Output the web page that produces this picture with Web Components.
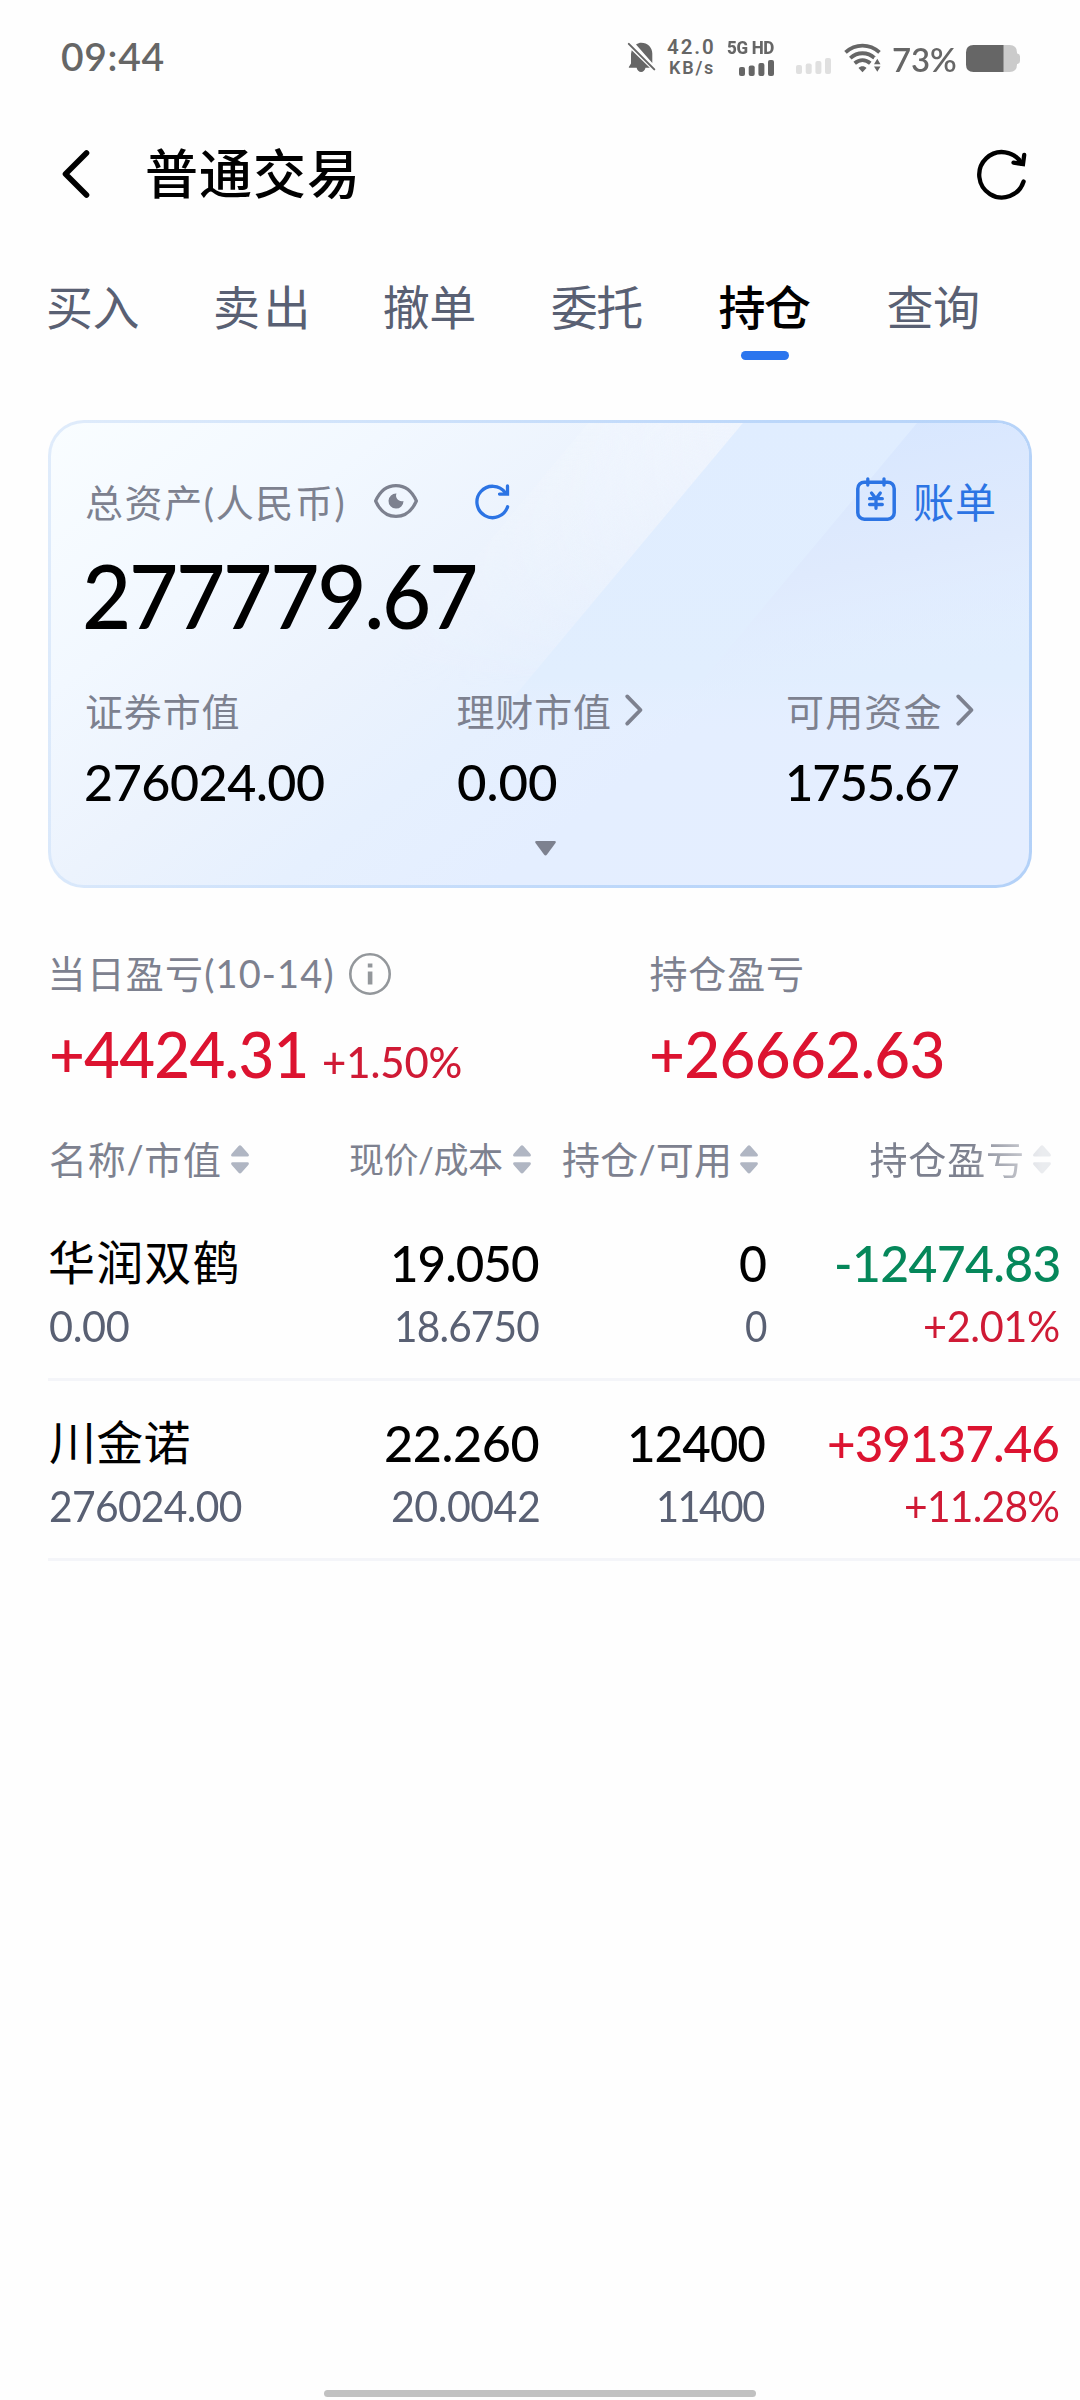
<!DOCTYPE html>
<html lang="zh-CN">
<head>
<meta charset="utf-8">
<title>普通交易</title>
<style>
html,body{margin:0;padding:0;background:#fefefe}
body{width:1080px;height:2400px;overflow:hidden;font-family:Lato,"Noto Sans CJK SC",sans-serif}
</style>
</head>
<body>
<trade-page></trade-page>
<script>
const ctx = document.createElement('canvas').getContext('2d');

class Base extends HTMLElement {
  constructor(){ super(); this.attachShadow({mode:'open'}); }
  connectedCallback(){ this.shadowRoot.innerHTML = `<style>*{box-sizing:border-box}${this.css()}</style>${this.html()}`; }
  css(){ return ''; }
  html(){ return '<slot></slot>'; }
}

/* One line of text whose ink spans exactly w pixels; text that is too wide is
   narrowed half by scaling and half by tracking. */
class FitText extends Base {
  css(){
    const s=+this.getAttribute('s'), w=+this.getAttribute('w'), wt=this.getAttribute('wt')||400, t=this.textContent;
    const stack=`${this.getAttribute('f')||'Lato'},"Noto Sans CJK SC",sans-serif`;
    ctx.font=`${wt} ${s}px ${stack}`;
    const m=ctx.measureText(t), ink=m.actualBoundingBoxLeft+m.actualBoundingBoxRight;
    const n=[...t].length, k=ink>w&&/^[ -~]+$/.test(t)?Math.sqrt(w/ink):1;
    const ls=n>1?(w/k-ink)/(n-1):0;
    return `:host{display:block;flex:none;width:${w}px;height:${s}px;line-height:${s}px;font-family:${stack};font-size:${s}px;font-weight:${wt};white-space:nowrap;letter-spacing:${ls.toFixed(3)}px;color:${this.getAttribute('c')||'inherit'}}
    span{display:block;margin-left:${(m.actualBoundingBoxLeft*k).toFixed(2)}px;${k<1?`transform:scaleX(${k.toFixed(4)});transform-origin:0 50%`:''}}`;
  }
  html(){ return '<span><slot></slot></span>'; }
}
customElements.define('fit-text',FitText);

const ICONS = {
  mute:[27,30,`<path fill="currentColor" d="M8 2.6C10 1.2 11.300 .7 13.300 .7c6.200 0 11 4.700 11 10.800v9.500zM3.700 8.300 21.800 25.800H17.500c-.6 2.600-2.200 4.200-4.400 4.200s-3.900-1.600-4.500-4.200H1.400C.6 25.800.7 24.800 1.300 24.200L3 21.500V12z"/><path d="M.8 1.900 26.300 27.400" stroke="currentColor" stroke-width="2" stroke-linecap="round"/>`],
  bars:[35,16,`<g fill="currentColor"><rect y="7" width="6" height="9" rx="2"/><rect x="9.700" y="5.500" width="6" height="10.500" rx="2"/><rect x="19.400" y="3" width="6" height="13" rx="2"/><rect x="29" width="6" height="16" rx="2"/></g>`],
  wifi:[37,30,`<g fill="none" stroke="currentColor" stroke-width="3.800"><path d="M1.500 9.300C11.500 .3 25.500 .3 35.500 9.300"/><path d="M6.300 15.100C13.500 8.600 23.500 8.600 30.700 15.100"/><path d="M10.700 20.300C15.500 16.200 21.500 16.200 26.300 20.300"/></g><path fill="currentColor" d="M14.500 25c2-2.300 6-2.300 8 0l-4 4.300z"/><path fill="#fefefe" d="M31 13.500 39 16.500V31H28V19z"/><path fill="currentColor" d="M33.300 15.800 36.500 21.300H30zM33.300 28.800 30 23.400h6.500z"/>`],
  battery:[54,27,`<path fill="#cbcbcb" d="M37 0h6.500Q51 0 51 7.500V8.500h.5q2.500.5 2.500 3v4.500q0 2.500-2.500 3H51v.5Q51 27 43.500 27H37z"/><path fill="#666" d="M7.500 0H37.500V27H7.500Q0 27 0 19.500v-12Q0 0 7.500 0z"/>`],
  back:[28,48,`<path d="M24.500 3 3.500 24 24.500 45" fill="none" stroke="#000" stroke-width="5.600" stroke-linecap="round" stroke-linejoin="round"/>`],
  reload:[50,50,`<path d="M46.600 32.500A22.700 22.700 0 1 1 44.700 14.600" fill="none" stroke="#000" stroke-width="4.300" stroke-linecap="round"/><path d="M47.200 6 46 15.100 36.500 13.600" fill="none" stroke="#000" stroke-width="4.300" stroke-linecap="round" stroke-linejoin="miter"/>`],
  eye:[44,34,`<path d="M1.600 17C6 7 13.500 1.600 22 1.600S38 7 42.400 17C38 27 30.500 32.400 22 32.400S6 27 1.600 17z" fill="none" stroke="#7d818f" stroke-width="3.200" stroke-linejoin="round"/><path fill="#7d818f" d="M22.500 9.600A7.500 7.500 0 1 0 29.500 17C25 18.300 20.500 14 22.500 9.600z"/>`],
  sync:[35,35,`<path d="M32.600 22.700A15.700 15.700 0 1 1 30.300 8.700" fill="none" stroke="#2c74e4" stroke-width="3.300" stroke-linecap="round"/><path d="M32.500 2V10.100H24.500" fill="none" stroke="#2c74e4" stroke-width="3.300" stroke-linecap="round"/>`],
  bill:[40,44,`<rect x="1.800" y="5.200" width="36.400" height="37" rx="6.500" fill="none" stroke="#2c74e4" stroke-width="3.500"/><g fill="none" stroke="#2c74e4" stroke-width="3.300" stroke-linecap="round"><path d="M11.800 1.800V8M28 1.800V8M15.500 16 20 21.800 24.300 16M20 22V31.300M13.600 21.700H26.300M13.600 27.500H26.300"/></g>`],
  more:[18,32,`<path d="M2.200 2.400 15.500 16 2.200 29.600" fill="none" stroke="#7d818f" stroke-width="3.800" stroke-linecap="round" stroke-linejoin="round"/>`],
  down:[21,15,`<path d="M1.500 0H19.500Q21.500.2 20.500 2L12 13.500Q10.500 15.500 9 13.500L.5 2Q-.5.2 1.500 0z" fill="#7d818f"/>`],
  info:[42,42,`<circle cx="21" cy="21" r="19.700" fill="none" stroke="#93979b" stroke-width="2.600"/><path fill="#93979b" d="M18.800 10.500h4.600v4h-4.600zM18.800 18.500h4.600v13h-4.600z"/>`],
  sort:[18,29,`<path fill="#b0b6c3" d="M7.600 1Q9 -.6 10.400 1L17.500 9Q18.600 11.500 16.500 11.500H1.500Q-.6 11.500.5 9zM7.600 27.800Q9 29.400 10.400 27.800L17.500 19.800Q18.600 17.300 16.500 17.300H1.500Q-.6 17.300.5 19.800z"/>`]
};
class UiIcon extends Base {
  css(){ const [w,h]=ICONS[this.getAttribute('name')]; return `:host{display:block;flex:none;width:${w}px;height:${h}px}svg{display:block;overflow:visible}`; }
  html(){ const [w,h,p]=ICONS[this.getAttribute('name')]; return `<svg width="${w}" height="${h}" viewBox="0 0 ${w} ${h}">${p}</svg>`; }
}
customElements.define('ui-icon',UiIcon);

class StatusBar extends Base {
  css(){ return `:host{display:flex;height:114px;padding:2px 60px 0 62px;align-items:center;color:#666}
  .gap{flex:1}.col{display:flex;flex-direction:column;align-items:flex-end}
  .net{margin:0 0 2px 12px}.sig{margin-left:14px}.faint{color:#e0e0e0;margin:16px 13px 0 22px}`; }
  html(){ return `<fit-text s="39" w="101.500" wt="600" style="margin-bottom:3px">09:44</fit-text><div class="gap"></div>
  <ui-icon name="mute" style="margin-top:-2px"></ui-icon>
  <div class="col net"><fit-text f="Roboto" s="20.500" w="46" wt="600">42.0</fit-text><fit-text f="Roboto" s="18" w="43" wt="600" style="margin-top:1px">KB/s</fit-text></div>
  <div class="col sig"><fit-text f="Roboto" s="17.500" w="47" wt="800">5G HD</fit-text><ui-icon name="bars" style="margin-top:2px"></ui-icon></div>
  <ui-icon name="bars" class="faint"></ui-icon>
  <ui-icon name="wifi"></ui-icon>
  <fit-text s="33" w="63" wt="600" style="margin:2px 10px 0 12px">73%</fit-text>
  <ui-icon name="battery" style="margin-top:1px"></ui-icon>`; }
}
customElements.define('status-bar',StatusBar);

class NavHeader extends Base {
  css(){ return `:host{display:flex;height:120px;align-items:center;padding:0 53px 0 62px}ui-icon:last-child{margin-left:auto}fit-text{margin:0 0 2px 57px}`; }
  html(){ return `<ui-icon name="back"></ui-icon><fit-text s="53" w="208" wt="500" c="#000">${this.getAttribute('label')}</fit-text><ui-icon name="reload"></ui-icon>`; }
}
customElements.define('nav-header',NavHeader);

class TabItem extends Base {
  css(){ return `:host{display:flex;flex-direction:column;align-items:center;width:91px;color:#596073}
  :host([active]){color:#000}i{display:none;width:48px;height:9px;border-radius:5px;background:#2b75ee;margin-top:20px}:host([active]) i{display:block}`; }
  html(){ const a=this.hasAttribute('active'); return `<fit-text s="47" w="90.500" wt="${a?500:400}">${this.getAttribute('label')}</fit-text><i></i>`; }
}
customElements.define('tab-item',TabItem);
class TabBar extends Base {
  css(){ return `:host{display:flex;gap:76.900px;height:126px;padding:50px 0 0 47.800px}`; }
}
customElements.define('tab-bar',TabBar);

class AssetCard extends Base {
  css(){ return `:host{display:block;position:relative;margin:60px 48px 0;height:468px;border:3px solid transparent;border-radius:36px;overflow:hidden;color:#000;
   background:linear-gradient(142deg,#f9fdff 0%,#f2f8ff 22%,#ecf3fd 38%,#e6f0fe 52%,#e4eeff 66%,#e5eeff 100%) padding-box,linear-gradient(105deg,#e0ecfb,#bcd7fa 65%,#b3d1f8) border-box}
  .bg{position:absolute;inset:0}
  .in{position:relative;padding:49px 35px 0}
  .row{display:flex;align-items:center;height:60px}
  .big{margin-top:18px}
  .cols{display:grid;grid-template-columns:371.500px 330.500px 1fr;margin-top:53px}
  .lab{display:flex;align-items:center;height:38px;margin-bottom:26px}
  .lab ui-icon{margin:-2px 0 0 15px}
  .down{display:flex;justify-content:center;margin:34px 0 0 11px}`; }
  html(){ const g='#7d818f'; return `<svg class="bg" width="978" height="462" viewBox="51 423 978 462">
   <defs><linearGradient id="a" gradientUnits="userSpaceOnUse" x1="520" y1="423" x2="650" y2="532"><stop offset="0" stop-color="#f7faff" stop-opacity="0"/><stop offset=".4" stop-color="#f5f9ff" stop-opacity=".35"/><stop offset="1" stop-color="#f1f5fd" stop-opacity=".75"/></linearGradient>
   <linearGradient id="f" x1="0" y1="0" x2="0" y2="1"><stop offset="0" stop-color="#fff"/><stop offset="1" stop-color="#000"/></linearGradient>
   <mask id="m"><path fill="url(#f)" d="M360 423H743V690H360z"/></mask>
   <linearGradient id="b" x1="0" y1="0" x2="0" y2="1"><stop offset="0" stop-color="#e0edff"/><stop offset=".8" stop-color="#e1eefe"/><stop offset="1" stop-color="#e4eeff" stop-opacity="0"/></linearGradient>
   <linearGradient id="c" x1="0" y1="0" x2=".25" y2="1"><stop offset="0" stop-color="#d6e6ff"/><stop offset=".6" stop-color="#dfeafd"/><stop offset="1" stop-color="#e4eeff" stop-opacity="0"/></linearGradient></defs>
   <path fill="url(#a)" mask="url(#m)" d="M588 423H743L520 690H365z"/><path fill="url(#b)" d="M743 423H1029V740H478z"/><path fill="url(#c)" d="M917 423H1029V700H686z"/></svg>
  <div class="in">
   <div class="row"><fit-text s="38" w="257.500" c="${g}">总资产(人民币)</fit-text><ui-icon name="eye" style="margin:-2px 0 0 30px"></ui-icon><ui-icon name="sync" style="margin:-2px 0 0 57px"></ui-icon>
    <ui-icon name="bill" style="margin:-6px 18px 0 auto"></ui-icon><fit-text s="41" w="80" c="#2c74e4">账单</fit-text></div>
   <fit-text class="big" s="89" w="390" wt="500">277779.67</fit-text>
   <div class="cols">
    <div><div class="lab"><fit-text s="38" w="152.500" c="${g}">证券市值</fit-text></div><fit-text s="51" w="238.500" wt="500">276024.00</fit-text></div>
    <div><div class="lab"><fit-text s="38" w="152.500" c="${g}">理财市值</fit-text><ui-icon name="more"></ui-icon></div><fit-text s="51" w="99" wt="500">0.00</fit-text></div>
    <div><div class="lab"><fit-text s="38" w="152.500" c="${g}">可用资金</fit-text><ui-icon name="more"></ui-icon></div><fit-text s="51" w="170.500" wt="500">1755.67</fit-text></div>
   </div>
   <div class="down"><ui-icon name="down"></ui-icon></div>
  </div>`; }
}
customElements.define('asset-card',AssetCard);

class ProfitSummary extends Base {
  css(){ return `:host{display:grid;grid-template-columns:599px 1fr;padding:65px 0 0 51.500px;height:213px}
  .l{display:flex;align-items:center;height:40px;color:#7d818f}.v{display:flex;align-items:flex-end;margin-top:29px;color:#dc1330}`; }
  html(){ return `<div><div class="l"><fit-text s="38" w="281">当日盈亏(10-14)</fit-text><ui-icon name="info" style="margin:1px 0 0 16px"></ui-icon></div>
   <div class="v"><fit-text s="63" w="254" wt="500">+4424.31</fit-text><fit-text s="42" w="137.500" wt="500" style="margin:0 0 2px 18px" c="#cf1a35">+1.50%</fit-text></div></div>
   <div><div class="l"><fit-text s="38" w="151.500">持仓盈亏</fit-text></div><div class="v"><fit-text s="63" w="291" wt="500" style="margin-left:1px">+26662.63</fit-text></div></div>`; }
}
customElements.define('profit-summary',ProfitSummary);

class HoldHead extends Base {
  css(){ return `:host{display:grid;grid-template-columns:268px 213px 227px 293px;padding:16px 0 0 50px;height:100px;align-items:center;color:#7d818f}
  div{display:flex;align-items:center;justify-content:flex-end}div:first-of-type{justify-content:flex-start}ui-icon{margin-left:11px}
  div:last-child{-webkit-mask:linear-gradient(90deg,#000 72%,rgba(0,0,0,.25) 97%)}`; }
  html(){ return `<div><fit-text s="38" w="170">名称/市值</fit-text><ui-icon name="sort"></ui-icon></div><div><fit-text s="35" w="152">现价/成本</fit-text><ui-icon name="sort"></ui-icon></div><div><fit-text s="38" w="165">持仓/可用</fit-text><ui-icon name="sort" style="margin-left:12px"></ui-icon></div><div><fit-text s="38" w="151.500">持仓盈亏</fit-text><ui-icon name="sort"></ui-icon></div>`; }
}
customElements.define('hold-head',HoldHead);

/* Each cell: "text:width" for the main line and the secondary line. */
class HoldRow extends Base {
  css(){ return `:host{display:block;height:180px;margin-left:48px;padding:36px 0 0 2px;border-bottom:3px solid #f4f5f9;box-sizing:border-box}
  .g{display:grid;grid-template-columns:275px 214px 226px 293.500px}
  .c{display:flex;flex-direction:column;align-items:flex-end;color:#000}.c:first-child{align-items:flex-start}
  .m{height:51px;display:flex;align-items:center}.s{margin-top:17px;color:#596073}.up{color:#dc1330}.up.s{color:#cf1a35}.dn{color:#05875a}`; }
  html(){ const rows=['main','sub'].map(k=>this.getAttribute(k).split(' ').map(x=>x.split(':')));
   return `<div class="g">${rows[0].map(([t,w],i)=>{ const [u,v]=rows[1][i]; const cl=x=>i<3?'':x[0]==='+'?'up':'dn';
    return `<div class="c"><div class="m ${cl(t)}"><fit-text s="${i?51:47}" w="${w}" wt="${i?500:400}">${t}</fit-text></div><div class="s ${cl(u)}"><fit-text s="42" w="${v}">${u}</fit-text></div></div>`; }).join('')}</div>`; }
}
customElements.define('hold-row',HoldRow);

class TradePage extends Base {
  css(){ return `:host{display:flex;flex-direction:column;width:1080px;height:2400px;overflow:hidden;background:#fefefe}
  .home{width:432px;height:7px;border-radius:4px;background:#c1c1c1;margin:auto auto 3px}`; }
  html(){ return `<status-bar></status-bar><nav-header label="普通交易"></nav-header>
  <tab-bar><tab-item label="买入"></tab-item><tab-item label="卖出"></tab-item><tab-item label="撤单"></tab-item><tab-item label="委托"></tab-item><tab-item label="持仓" active></tab-item><tab-item label="查询"></tab-item></tab-bar>
  <asset-card></asset-card><profit-summary></profit-summary><hold-head></hold-head>
  <hold-row main="华润双鹤:187.5 19.050:146 0:25 -12474.83:222" sub="0.00:79.5 18.6750:142.5 0:19.5 +2.01%:133.5"></hold-row>
  <hold-row main="川金诺:139.5 22.260:153 12400:135.5 +39137.46:229.5" sub="276024.00:192 20.0042:147.5 11400:106 +11.28%:152.5"></hold-row>
  <div class="home"></div>`; }
}
customElements.define('trade-page',TradePage);
</script>
</body>
</html>
